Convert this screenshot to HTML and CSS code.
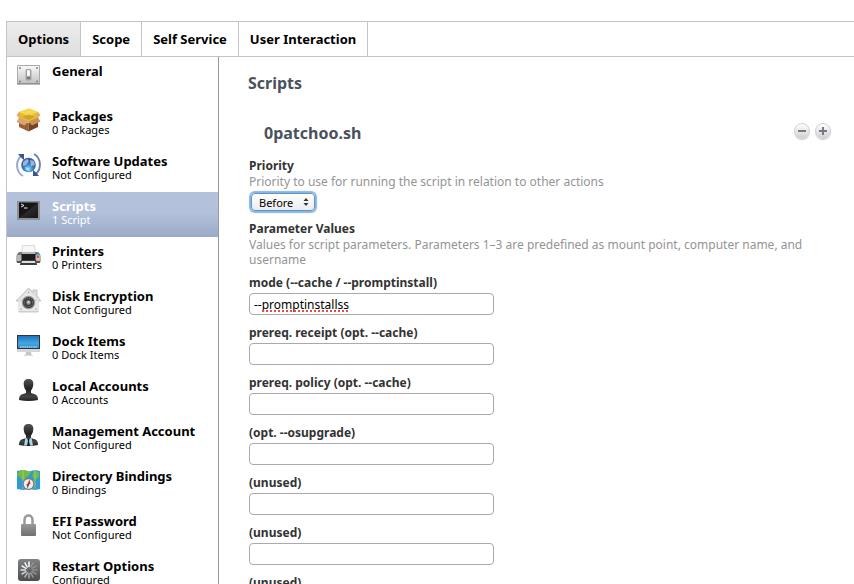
FILE: index.html
```html
<!DOCTYPE html>
<html lang="en">
<head>
<meta charset="utf-8">
<title>Policy Options</title>
<link rel="stylesheet" href="styles.css">
</head>
<body>
<div class="policy">
  <nav class="tabs" aria-label="Policy">
    <a class="tab tab-active" href="#options">Options</a>
    <a class="tab" href="#scope">Scope</a>
    <a class="tab" href="#self-service">Self Service</a>
    <a class="tab" href="#user-interaction">User Interaction</a>
  </nav>
  <div class="body">
    <nav class="sidebar" aria-label="Payloads">
      <a class="item" href="#general">
        <svg class="icon" viewBox="0 0 24 24"><defs><linearGradient id="plate" x2="0" y2="1"><stop stop-color="#fafafa"/><stop offset="1" stop-color="#bfc1c4"/></linearGradient></defs><path d="M1.500 2.500h22v18h-22z" fill="url(#plate)" stroke="#aaa"/><path d="M1 21h23" stroke="#777"/><g fill="#777"><circle cx="4" cy="5" r=".9"/><circle cx="21" cy="5" r=".9"/><circle cx="4" cy="18.500" r=".9"/><circle cx="21" cy="18.500" r=".9"/></g><rect x="10" y="6.500" width="5" height="10.500" rx="1" fill="#aaa" stroke="#888" stroke-width=".6"/><rect x="11" y="7" width="3" height="6" rx="1" fill="#f8f8f8"/><path d="M11 14h3v2h-3z" fill="#777"/></svg>
        <span class="label"><span class="name">General</span></span>
      </a>
      <a class="item" href="#packages">
        <svg class="icon" viewBox="0 0 24 24"><path d="M3 12l9.500 3v8.500L3 19z" fill="#9a6035"/><path d="M12.500 15l9.500-3v7l-9.500 4.500z" fill="#754321"/><path d="M3 4l10-3.500L22 4v7l-9.500 4L3 11z" fill="#e6bd2e"/><path d="M3 4l10-3.500L22 4l-9.500 4z" fill="#f5d94e"/><path d="M6 9l7-2.500L19 9l-6.500 3z" fill="#d0a232"/><path d="M3 4L.5 7l2.500 3 1-5zM22 4l2.500 3-3 3-1-5z" fill="#e9a46b"/><path d="M3 9.500l9.500 4-4 4L.5 14z" fill="#dda376"/><path d="M22 9.500l-9.500 4 3.500 4 8.500-4z" fill="#cc8c5c"/></svg>
        <span class="label"><span class="name">Packages</span><span class="status">0 Packages</span></span>
      </a>
      <a class="item" href="#software-updates">
        <svg class="icon" viewBox="0 0 24 24"><defs><radialGradient id="globe" cx=".5" cy=".75"><stop stop-color="#7ed8f8"/><stop offset=".6" stop-color="#3c83c8"/><stop offset="1" stop-color="#3a5ca5"/></radialGradient></defs><circle cx="12.500" cy="12" r="7.300" fill="url(#globe)"/><path d="M7 9l4-3 2 2-3 4-3 1zM14 7l4 1 1 4-4 1zM9 14l4 1 1 3-4-1z" fill="#d4edfa" opacity=".6"/><g fill="none" stroke="#9aabd0" stroke-width="2"><path d="M7 23C0 19-1 9 5 3"/><path d="M18 1c7 4 8 14 2 20" stroke="#6d82b5"/></g><path d="M2 1h6v6L5.500 5z" fill="#3c538e"/><path d="M23 23h-6v-6l2.500 2z" fill="#3c538e"/></svg>
        <span class="label"><span class="name">Software Updates</span><span class="status">Not Configured</span></span>
      </a>
      <a class="item item-active" href="#scripts" aria-current="page">
        <svg class="icon" viewBox="0 0 24 24"><defs><linearGradient id="screen" x2="1" y2="1"><stop stop-color="#111"/><stop offset=".5" stop-color="#171717"/><stop offset=".52" stop-color="#292929"/><stop offset="1" stop-color="#161616"/></linearGradient></defs><path d="M1 3h23v19H1z" fill="#8d9095"/><path d="M3 4.500h19v15.500H3z" fill="url(#screen)"/><path d="M5 6l3 1.500L5 9M8 10h3.500" fill="none" stroke="#eee"/></svg>
        <span class="label"><span class="name">Scripts</span><span class="status">1 Script</span></span>
      </a>
      <a class="item" href="#printers">
        <svg class="icon" viewBox="0 0 24 24"><path d="M6.500 2.500h12L19 11H6z" fill="#f7f7f7" stroke="#ccc" stroke-width=".7"/><path d="M3 9h19l3 4v6l-2 1H2l-2-1v-6z" fill="#b5b7b9"/><path d="M3 9h3v2h13V9h3l2.500 3H.5z" fill="#777"/><path d="M5.500 11h14v6h-14z" fill="#1e1e20"/><path d="M1 18h23v2H1z" fill="#555"/><path d="M5 17h15l1 5H4z" fill="#3a3c3e"/><path d="M6 18h13l.5 2h-14z" fill="#ddd"/><path d="M21 11h2v2h-2z" fill="#44bde0"/><path d="M21 13h2v2h-2z" fill="#e4407c"/><path d="M21 15h2v2h-2z" fill="#f0d838"/></svg>
        <span class="label"><span class="name">Printers</span><span class="status">0 Printers</span></span>
      </a>
      <a class="item" href="#disk-encryption">
        <svg class="icon" viewBox="0 0 24 24"><path d="M12.500 0L17 4V2h4v6l4 5h-3v11H3V13H0z" fill="#dcdcdc" stroke="#b5b5b5" stroke-width=".7"/><path d="M12.500 2L3 12v11h19V12z" fill="#e9e9e9"/><g fill="#999"><circle cx="12.500" cy="4.500" r=".7"/><circle cx="5" cy="21" r=".7"/><circle cx="20" cy="21" r=".7"/><circle cx="5" cy="12" r=".6"/><circle cx="20" cy="12" r=".6"/></g><circle cx="12.500" cy="14.500" r="6.800" fill="#999"/><circle cx="12.500" cy="14.500" r="5.500" fill="#3c3c3e"/><circle cx="12.500" cy="14.500" r="4.200" fill="none" stroke="#888" stroke-width="1" stroke-dasharray="1 1.200"/><circle cx="12.500" cy="14.500" r="2.200" fill="#999"/><circle cx="12.500" cy="14" r="1" fill="#ddd"/></svg>
        <span class="label"><span class="name">Disk Encryption</span><span class="status">Not Configured</span></span>
      </a>
      <a class="item" href="#dock-items">
        <svg class="icon" viewBox="0 0 24 24"><defs><linearGradient id="blue" x2="0" y2="1"><stop stop-color="#1f74bc"/><stop offset=".6" stop-color="#45a5df"/><stop offset="1" stop-color="#2c8fd3"/></linearGradient></defs><path d="M10 19h5l1 4H9z" fill="#c5c7ca"/><path d="M8 22h9v1H8z" fill="#ddd"/><path d="M1 2h23v17H1z" fill="#d5d7da"/><path d="M1 2h23v14H1z" fill="#333"/><path d="M2 3h21v12H2z" fill="url(#blue)"/><path d="M4 14h17" stroke="#d9ecf7" stroke-dasharray="1.500 .7"/></svg>
        <span class="label"><span class="name">Dock Items</span><span class="status">0 Dock Items</span></span>
      </a>
      <a class="item" href="#local-accounts">
        <svg class="icon" viewBox="0 0 24 24"><defs><linearGradient id="person" x2="0" y2="1"><stop stop-color="#555"/><stop offset=".45" stop-color="#222"/><stop offset=".8" stop-color="#444"/><stop offset="1" stop-color="#222"/></linearGradient></defs><path d="M12.500 1c3.300 0 5 2 4.800 5-.1 3-1 5-2.300 6.500V15l4.500 1.500c2 1 2.500 3 2.500 5.500-6 1.300-13 1.300-19 0 0-2.500.5-4.500 2.500-5.500L10 15v-2.500C8.700 11 7.800 9 7.700 6c-.2-3 1.500-5 4.800-5z" fill="url(#person)"/></svg>
        <span class="label"><span class="name">Local Accounts</span><span class="status">0 Accounts</span></span>
      </a>
      <a class="item" href="#management-account">
        <svg class="icon" viewBox="0 0 24 24"><path d="M12.500 1c3.300 0 5 2 4.800 5-.1 3-1 5-2.300 6.500V15l4.500 1.500c2 1 2.500 3 2.500 5.500-6 1.300-13 1.300-19 0 0-2.500.5-4.500 2.500-5.500L10 15v-2.500C8.700 11 7.800 9 7.700 6c-.2-3 1.500-5 4.800-5z" fill="url(#person)"/><path d="M9.500 14.500l3 2 3-2 1.500 8H8z" fill="#a9d5e8"/><path d="M11.500 16h2l-.5 2 1 5h-3l1-5z" fill="#111"/></svg>
        <span class="label"><span class="name">Management Account</span><span class="status">Not Configured</span></span>
      </a>
      <a class="item" href="#directory-bindings">
        <svg class="icon" viewBox="0 0 24 24"><path d="M1 3l6-1 6 1.500L19 2l5 1v18l-5 1-6-1-6 1-6-1z" fill="#2f9bd4"/><path d="M3 3l5-1 5 1.500 2 1-3 4-3 1 3 3-2 2-5-4-4-4zM18 3l5 1v5l-4 3-3-4zM12 11l6 1 2 4-3 5h-3l-4-6z" fill="#75b93d"/><path d="M7 2v19M19 2v19" stroke="#fff" opacity=".3"/><circle cx="12.500" cy="16" r="6" fill="#777"/><circle cx="12.500" cy="16" r="4.800" fill="#eee"/><path d="M13.500 11.500l1 4.500h-3z" fill="#cf302b"/><path d="M11.500 20.500l-1-4.500h3z" fill="#555"/></svg>
        <span class="label"><span class="name">Directory Bindings</span><span class="status">0 Bindings</span></span>
      </a>
      <a class="item" href="#efi-password">
        <svg class="icon" viewBox="0 0 24 24"><defs><linearGradient id="lock" x2="0" y2="1"><stop stop-color="#999"/><stop offset="1" stop-color="#707070"/></linearGradient></defs><path d="M8.500 12V7c0-6 8-6 8 0v5" fill="none" stroke="#999" stroke-width="2.500"/><rect x="5" y="11" width="15" height="12" rx="1" fill="url(#lock)"/></svg>
        <span class="label"><span class="name">EFI Password</span><span class="status">Not Configured</span></span>
      </a>
      <a class="item" href="#restart-options">
        <svg class="icon" viewBox="0 0 24 24"><defs><linearGradient id="tile" x2="0" y2="1"><stop stop-color="#808284"/><stop offset="1" stop-color="#4b4d4f"/></linearGradient></defs><rect x="2" y="1" width="22" height="22" rx="3" fill="url(#tile)"/><g stroke="#fff" stroke-width="1.500" stroke-linecap="round"><path d="M13 4v4.500"/><path d="M17 5.100l-2.200 3.900" opacity=".25"/><path d="M20 8l-4 2.300" opacity=".25"/><path d="M21 12h-4.500" opacity=".25"/><path d="M20 16l-4-2.300" opacity=".3"/><path d="M17 19l-2.200-4" opacity=".4"/><path d="M13 20v-4.500" opacity=".5"/><path d="M9 19l2.200-4" opacity=".6"/><path d="M6 16l4-2.300" opacity=".7"/><path d="M5 12h4.500" opacity=".8"/><path d="M6 8l4 2.300" opacity=".9"/><path d="M9 5l2.200 4"/></g></svg>
        <span class="label"><span class="name">Restart Options</span><span class="status">Configured</span></span>
      </a>
    </nav>
    <main class="content">
      <h1 class="title">Scripts</h1>
      <div class="script-head">
        <h2 class="script-name">0patchoo.sh</h2>
        <button class="round" type="button" aria-label="Remove script"><svg viewBox="0 0 14 14"><path d="M3 7h8" stroke="#777b7f" stroke-width="2"/></svg></button>
        <button class="round" type="button" aria-label="Add script"><svg viewBox="0 0 14 14"><path d="M3 7h8M7 3v8" stroke="#777b7f" stroke-width="2"/></svg></button>
      </div>
      <form class="form">
        <div class="group">
          <label class="caption" for="priority">Priority</label>
          <p class="hint">Priority to use for running the script in relation to other actions</p>
          <div class="picker">
            <select class="select" id="priority"><option>Before</option><option>After</option></select>
            <svg class="arrows" viewBox="0 0 6 10"><path d="M3 1l2.500 3h-5zM3 9L.5 6h5z" fill="#333"/></svg>
          </div>
        </div>
        <div class="group">
          <h3 class="caption">Parameter Values</h3>
          <p class="hint">Values for script parameters. Parameters 1–3 are predefined as mount point, computer name, and username</p>
        </div>
        <div class="field">
          <label class="caption" for="p4">mode (--cache / --promptinstall)</label>
          <div class="entry"><input class="input" id="p4" type="text" value="--promptinstallss" spellcheck="false"><span class="misspelt"></span></div>
        </div>
        <div class="field"><label class="caption" for="p5">prereq. receipt (opt. --cache)</label><input class="input" id="p5" type="text"></div>
        <div class="field"><label class="caption" for="p6">prereq. policy (opt. --cache)</label><input class="input" id="p6" type="text"></div>
        <div class="field"><label class="caption" for="p7">(opt. --osupgrade)</label><input class="input" id="p7" type="text"></div>
        <div class="field"><label class="caption" for="p8">(unused)</label><input class="input" id="p8" type="text"></div>
        <div class="field"><label class="caption" for="p9">(unused)</label><input class="input" id="p9" type="text"></div>
        <div class="field"><label class="caption" for="p10">(unused)</label><input class="input" id="p10" type="text"></div>
      </form>
    </main>
  </div>
</div>
</body>
</html>
```
FILE: styles.css
```css
* { box-sizing: border-box; }
html { height: 100%; overflow: hidden; }
body {
  margin: 0;
  background: #fff;
  color: #000;
  font-family: "Noto Sans", "Open Sans", sans-serif;
  font-size: 12px;
}
h1, h2, h3, p { margin: 0; }

.policy {
  margin: 21px 0 0 6px;
  border: 1px solid #c4c4c4;
  border-right: 0;
}
.tabs { display: flex; border-bottom: 1px solid #c4c4c4; }
.tab {
  padding: 0 11px;
  border-right: 1px solid #c4c4c4;
  color: #000;
  font-size: 13px;
  font-weight: 700;
  line-height: 34px;
  text-decoration: none;
}
.tab-active { background: linear-gradient(#ededed, #dedede); }

.body { display: flex; }
.sidebar { flex: 0 0 212px; border-right: 1px solid #999; }
.item {
  display: flex;
  gap: 12px;
  height: 45px;
  padding: 6px 0 0 9px;
  color: #000;
  text-decoration: none;
}
.item-active { background: linear-gradient(#b3c1da 45%, #9aabc9); color: #fff; }
.icon { flex: none; width: 24px; height: 24px; overflow: visible; }
.label { display: flex; flex-direction: column; white-space: nowrap; }
.name { font-size: 13px; font-weight: 700; line-height: 16px; }
.status { font-size: 11px; line-height: 12px; }

.content { flex: 1; min-width: 0; padding: 14px 23px 0 29px; }
.title { color: #49525b; font-size: 16px; line-height: 24px; }
.script-head {
  display: flex;
  align-items: center;
  gap: 5px;
  margin: 25px 0 0 16px;
}
.script-name { flex: 1; color: #49525b; font-size: 16px; line-height: 26px; }
.round {
  width: 16px;
  height: 16px;
  margin-bottom: 4px;
  padding: 0;
  border: 1px solid #d2d2d2;
  border-radius: 50%;
  background: linear-gradient(#fff, #cfd1d4);
  box-shadow: 0 1px 1px #ccc;
}
.round svg { display: block; width: 14px; height: 14px; }

.form { padding: 12px 0 0 1px; }
.group { margin-bottom: 8px; }
.caption { display: block; color: #333; font-size: 12px; font-weight: 700; line-height: 16px; }
.hint { color: #949494; font-size: 12px; line-height: 15px; }
.picker { position: relative; width: 64px; margin: 4px 0 10px 2px; }
.select {
  display: block;
  width: 100%;
  height: 18px;
  padding: 0 7px;
  appearance: none;
  border: 1px solid #5c94cc;
  border-radius: 4px;
  outline: 0;
  background: linear-gradient(#fff, #ececec);
  box-shadow: 0 0 1px 2px #8ab5df;
  color: #000;
  font: 11px "Noto Sans", sans-serif;
}
.arrows { position: absolute; top: 4px; right: 6px; width: 6px; height: 10px; pointer-events: none; }
.field { margin-bottom: 10px; }
.field .caption { margin-bottom: 2px; }
.entry { position: relative; }
.input {
  display: block;
  width: 245px;
  height: 22px;
  padding: 0 4px;
  border: 1px solid #aaa;
  border-radius: 4px;
  background: #fff;
  color: #000;
  font: 12px "Noto Sans", sans-serif;
}
.misspelt {
  position: absolute;
  left: 13px;
  bottom: 3px;
  width: 88px;
  height: 2px;
  background: repeating-linear-gradient(90deg, #f0473f 0 2px, transparent 2px 4px);
}
```
